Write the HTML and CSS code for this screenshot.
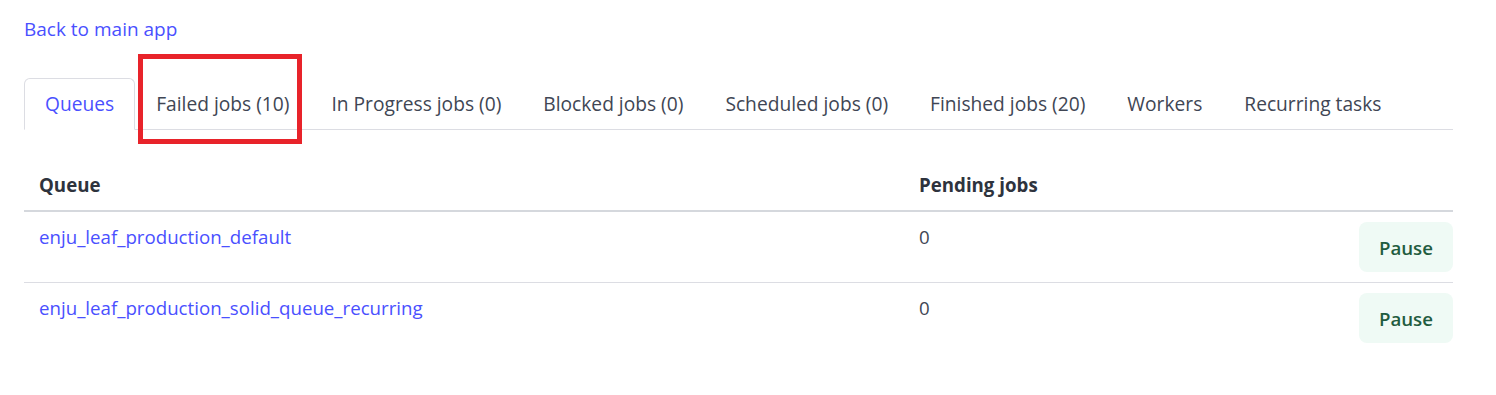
FILE: index.html
```html
<!DOCTYPE html>
<html lang="en">
<head>
    <meta charset="UTF-8">
    <meta name="viewport" content="width=device-width, initial-scale=1.0">
    <title>Mission Control - Queues</title>
    <link rel="stylesheet" href="styles.css">
</head>
<body>
    <div class="page">
        <p class="back"><a href="javascript:;">Back to main app</a></p>

        <div class="tabs">
            <ul>
                <li class="active"><a href="javascript:;">Queues</a></li>
                <li class="marked"><a href="javascript:;">Failed jobs (10)</a></li>
                <li><a href="javascript:;">In Progress jobs (0)</a></li>
                <li><a href="javascript:;">Blocked jobs (0)</a></li>
                <li><a href="javascript:;">Scheduled jobs (0)</a></li>
                <li><a href="javascript:;">Finished jobs (20)</a></li>
                <li><a href="javascript:;">Workers</a></li>
                <li><a href="javascript:;">Recurring tasks</a></li>
            </ul>
        </div>

        <table class="queues">
            <thead>
                <tr>
                    <th class="col-name">Queue</th>
                    <th class="col-pending">Pending jobs</th>
                    <th class="col-action"></th>
                </tr>
            </thead>
            <tbody>
                <tr>
                    <td><a href="javascript:;">enju_leaf_production_default</a></td>
                    <td>0</td>
                    <td class="action"><button class="btn">Pause</button></td>
                </tr>
                <tr>
                    <td><a href="javascript:;">enju_leaf_production_solid_queue_recurring</a></td>
                    <td>0</td>
                    <td class="action"><button class="btn">Pause</button></td>
                </tr>
            </tbody>
        </table>
    </div>
</body>
</html>
```

FILE: styles.css
```css
*{
    margin: 0px;
    padding: 0px;
    list-style: none;
    text-decoration: none;
    box-sizing: border-box;
}
body{
    font-family: "Open Sans", "Noto Sans", sans-serif;
    font-size: 18.7px;
    line-height: 30px;
    color: #404654;
    background: #fff;
}
a{
    color: #4a50ff;
}
.page{
    padding: 14px 43px 0 24px;
}
.back{
    font-size: 19px;
    margin-bottom: 34px;
}
/* tabs */
.tabs{
    font-size: 19.2px;
    margin-bottom: 30px;
}
.tabs ul{
    display: flex;
    border-bottom: 1px solid #dcdde3;
}
.tabs li{
    position: relative;
    margin-bottom: -1px;
}
.tabs li a{
    display: block;
    padding: 10px 20px;
    border: 1px solid transparent;
    border-radius: 6px 6px 0 0;
    color: #404654;
}
.tabs li.active a{
    color: #4a50ff;
    background: #fff;
    border-color: #dcdde3;
    border-bottom-color: transparent;
}
/* red annotation box */
.tabs li.marked::after{
    content: "";
    box-sizing: border-box;
    position: absolute;
    left: 3px;
    top: -24px;
    width: 164px;
    height: 90px;
    border: 5px solid #e8232a;
    pointer-events: none;
}
/* table */
.queues{
    width: 100%;
    border-collapse: collapse;
}
.queues th,
.queues td{
    text-align: left;
    vertical-align: top;
    padding: 10px 15px;
}
.queues th{
    color: #2e333d;
    font-weight: 700;
    border-bottom: 2px solid #d5d8dd;
}
.queues tbody tr + tr td{
    border-top: 1px solid #dcdde3;
}
.col-name{
    width: 880px;
}
.queues .action{
    text-align: right;
    padding-right: 0;
}
.btn{
    font-family: inherit;
    font-size: 18.7px;
    font-weight: 600;
    height: 50px;
    padding: 0 19px;
    border: 1px solid transparent;
    border-radius: 8px;
    background: #effaf5;
    color: #1f5c40;
    cursor: pointer;
}
```
